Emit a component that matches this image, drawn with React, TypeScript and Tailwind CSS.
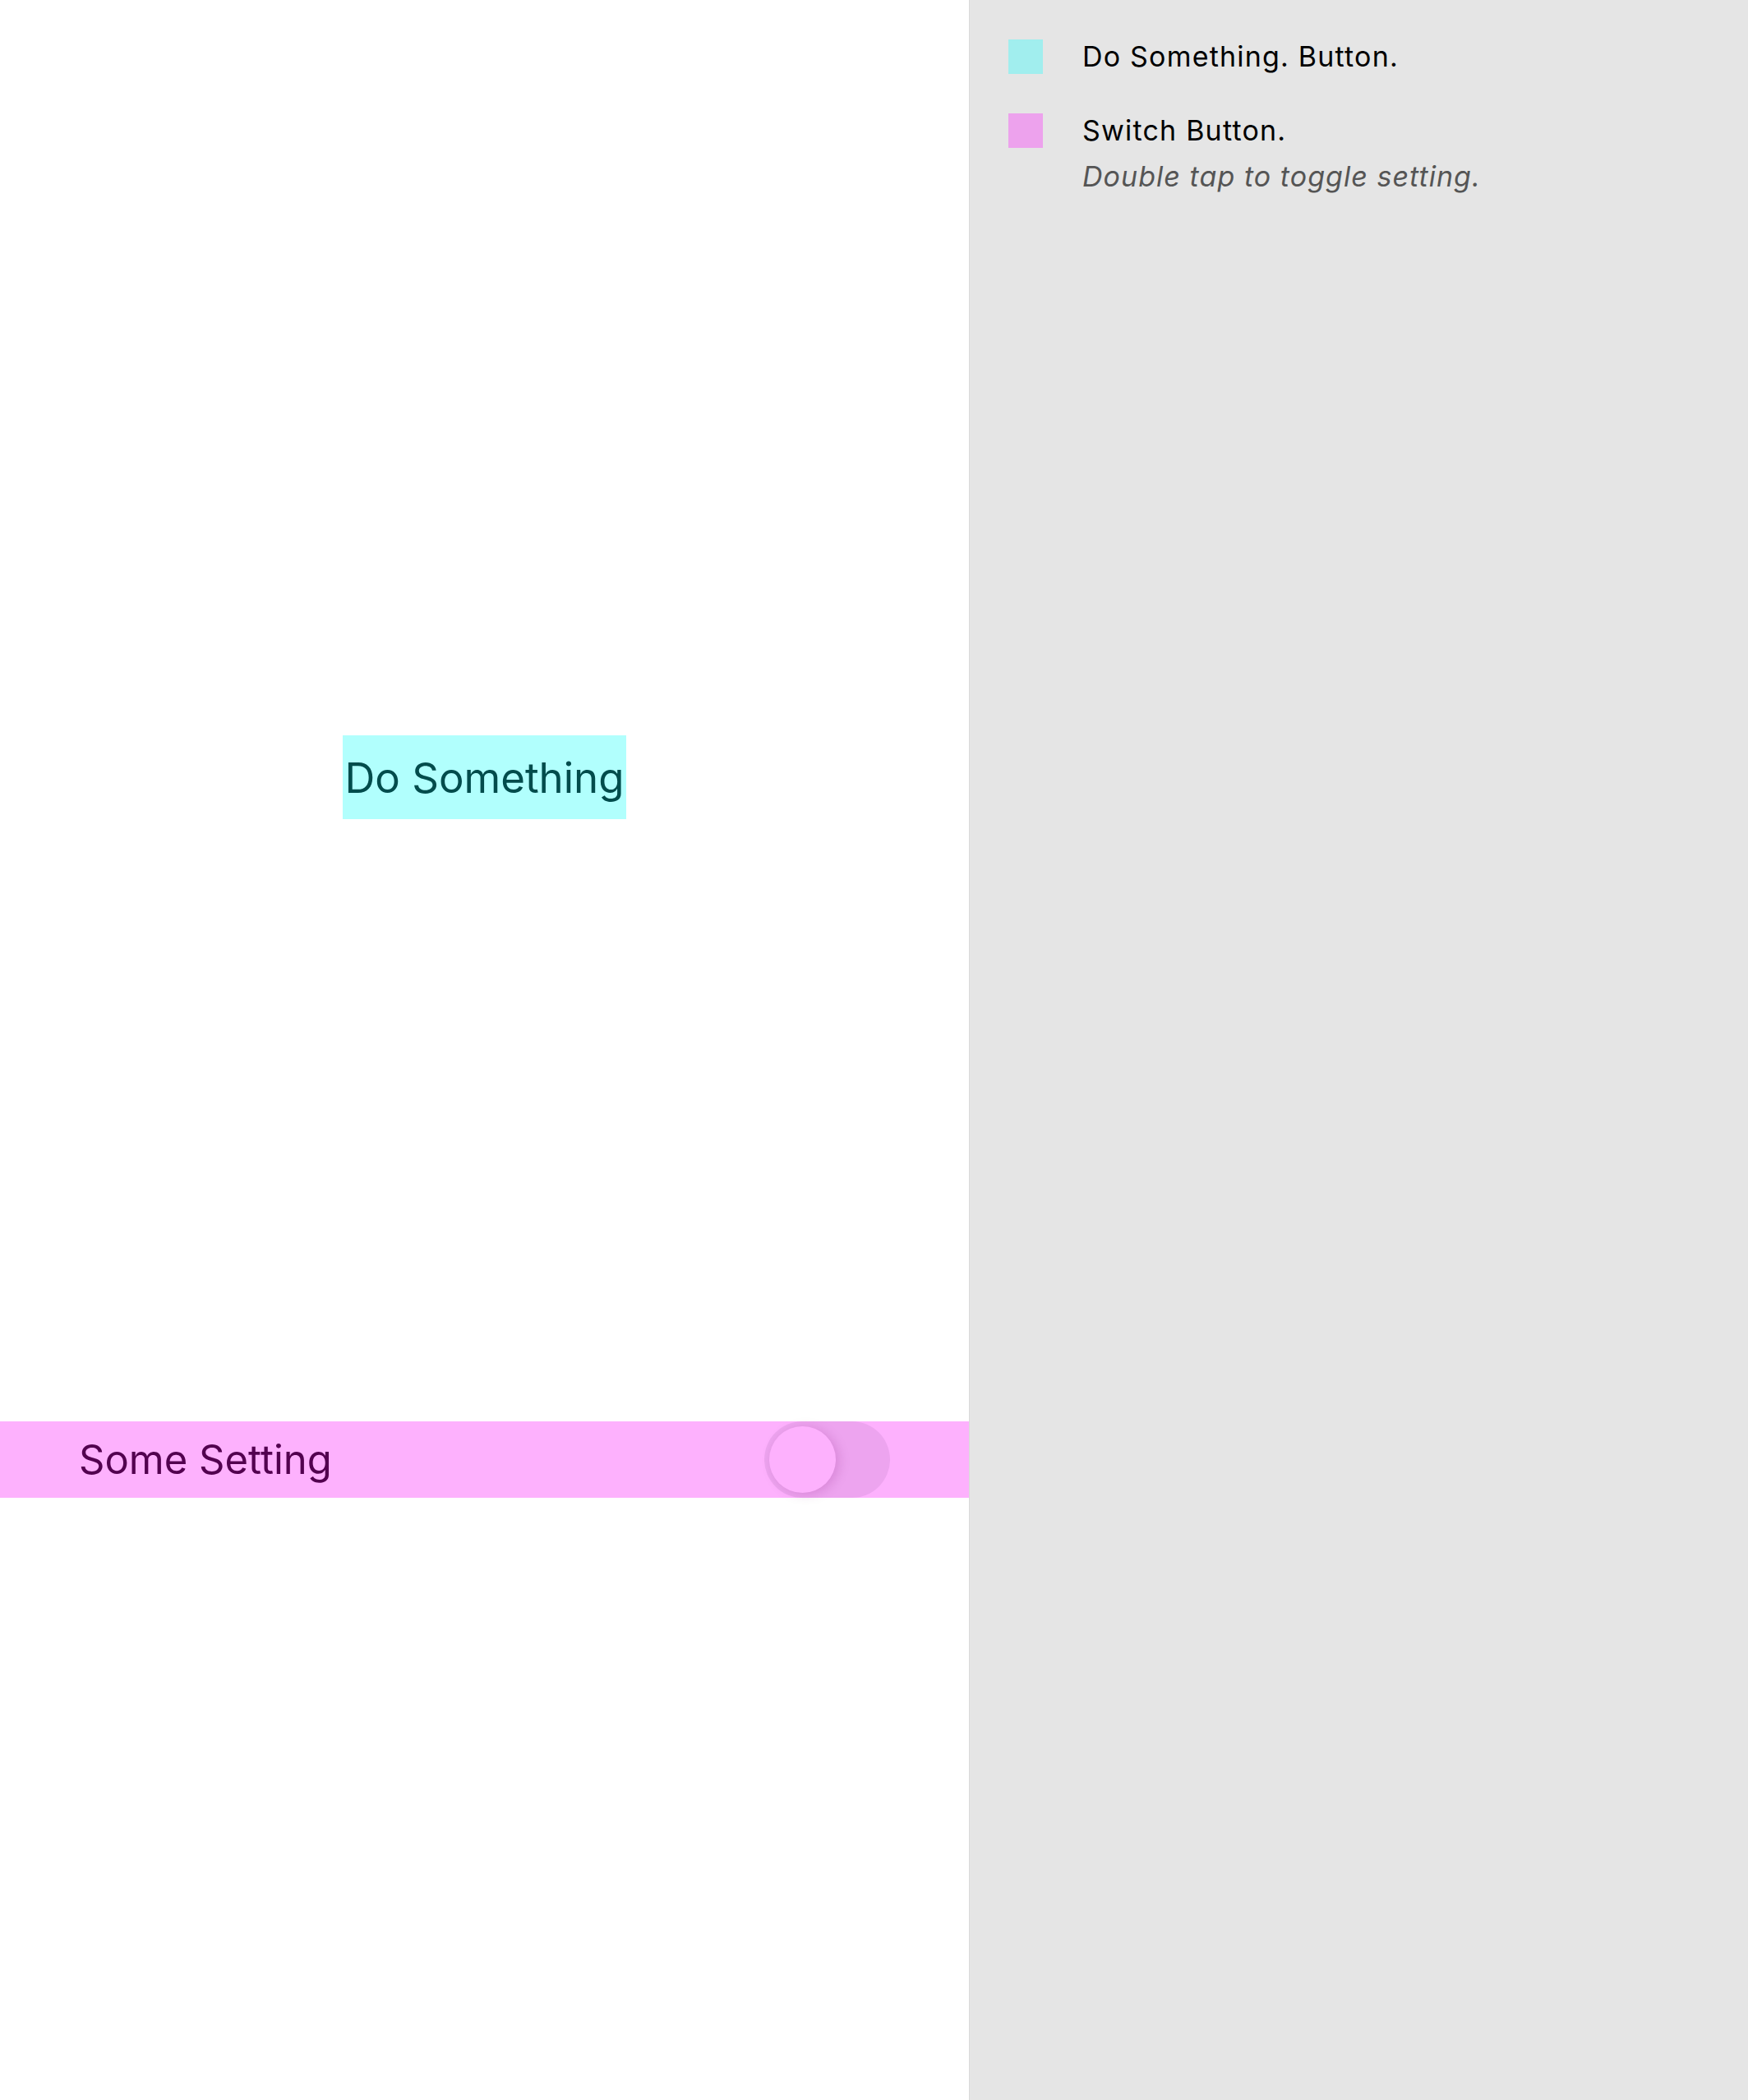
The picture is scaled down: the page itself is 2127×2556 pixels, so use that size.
import React from 'react';

const font = { fontFamily: 'Inter, "Noto Sans", sans-serif' };

export default function App() {
  return (
    <div className="flex w-[2127px] h-[2556px] bg-white" style={font}>
      {/* App screen */}
      <div className="w-[1179px] shrink-0 flex flex-col bg-white">
        <div className="pt-[895px] flex justify-center">
          <button className="h-[102px] w-[345px] bg-[#b1fffd] text-[#024c4c] text-[51px] leading-none flex items-center justify-center">
            Do Something
          </button>
        </div>
        <div className="mt-[733px] h-[93px] bg-[#fdb1fd] flex items-center justify-between pl-[96px] pr-[96px]">
          <span className="text-[49px] leading-none text-[#52004f]">Some Setting</span>
          <div className="w-[153px] h-[93px] rounded-full bg-[#eda4ef] flex items-center pl-[6px]">
            <div className="w-[81px] h-[81px] rounded-full bg-[#fdb1fd] shadow-[4px_2px_14px_rgba(120,0,110,0.18)]" />
          </div>
        </div>
      </div>

      {/* Accessibility inspector */}
      <div className="flex-1 bg-[#e5e5e5] border-l border-[#dadada] pl-[47px] pt-[48px] flex flex-col gap-[48px]">
        <div className="flex gap-[48px]">
          <div className="w-[42px] h-[42px] bg-[#a1eeee] shrink-0" />
          <div className="text-[34px] leading-[42px] tracking-[1.2px] text-black">Do Something. Button.</div>
        </div>
        <div className="flex gap-[48px]">
          <div className="w-[42px] h-[42px] bg-[#eda2ed] shrink-0" />
          <div className="flex flex-col">
            <div className="text-[34px] leading-[42px] tracking-[1.2px] text-black">Switch Button.</div>
            <div className="mt-[14px] text-[34px] leading-[42px] tracking-[1.05px] italic text-[#555555]">
              Double tap to toggle setting.
            </div>
          </div>
        </div>
      </div>
    </div>
  );
}
